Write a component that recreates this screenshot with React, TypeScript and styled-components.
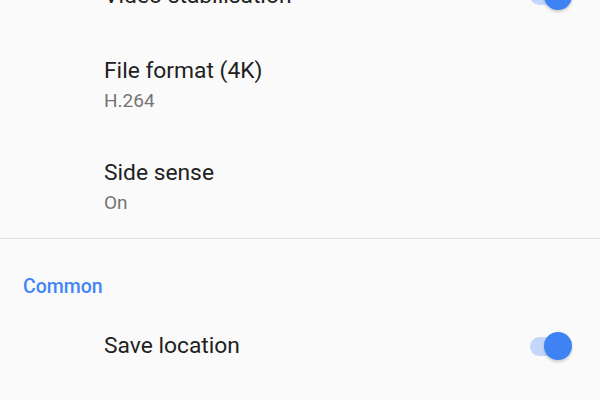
import styled, { createGlobalStyle } from "styled-components";

const GlobalStyle = createGlobalStyle`
  html, body {
    margin: 0;
    padding: 0;
    background: #fafafa;
    overflow: hidden;
  }
  body {
    font-family: Roboto, "Noto Sans", sans-serif;
  }
`;

// the list is scrolled: the first row is partly above the window
const Screen = styled.div`
  width: 600px;
  height: 400px;
  overflow: hidden;
  background: #fafafa;
`;

const List = styled.div`
  margin-top: -43px;
  display: flex;
  flex-direction: column;
`;

const Row = styled.div<{ $height: number }>`
  height: ${(p) => p.$height}px;
  display: flex;
  align-items: center;
  padding: 0 28px 0 104px;
`;

const Texts = styled.div`
  flex: 1;
  display: flex;
  flex-direction: column;
`;

const Title = styled.div`
  font-size: 22.8px;
  line-height: 30px;
  color: #212121;
`;

const Summary = styled.div`
  margin-top: 2px;
  font-size: 19px;
  line-height: 26px;
  color: #757575;
`;

const Divider = styled.div`
  height: 1px;
  background: #e0e0e0;
`;

const Header = styled.div`
  height: 67px;
  display: flex;
  align-items: flex-end;
  padding: 0 0 8px 23px;
  box-sizing: border-box;
  font-size: 19.5px;
  font-weight: 500;
  color: #4285f4;
`;

const Switch = styled.div`
  position: relative;
  width: 42px;
  height: 28px;
  display: flex;
  align-items: center;
`;

const Track = styled.div`
  width: 38px;
  height: 19px;
  border-radius: 10px;
  background: #c3d7fb;
`;

const Thumb = styled.div`
  position: absolute;
  right: 0;
  top: 0;
  width: 28px;
  height: 28px;
  border-radius: 50%;
  background: #3e82f4;
  box-shadow: 0 2px 3px rgba(0, 0, 0, 0.18);
`;

const Toggle = () => (
  <Switch>
    <Track />
    <Thumb />
  </Switch>
);

export default function App() {
  return (
    <>
      <GlobalStyle />
      <Screen>
        <List>
          <Row $height={77}>
            <Texts>
              <Title>Video stabilisation</Title>
            </Texts>
            <Toggle />
          </Row>
          <Row $height={102}>
            <Texts>
              <Title>File format (4K)</Title>
              <Summary>H.264</Summary>
            </Texts>
          </Row>
          <Row $height={102}>
            <Texts>
              <Title>Side sense</Title>
              <Summary>On</Summary>
            </Texts>
          </Row>
          <Divider />
          <Header>Common</Header>
          <Row $height={80}>
            <Texts>
              <Title>Save location</Title>
            </Texts>
            <Toggle />
          </Row>
        </List>
      </Screen>
    </>
  );
}
